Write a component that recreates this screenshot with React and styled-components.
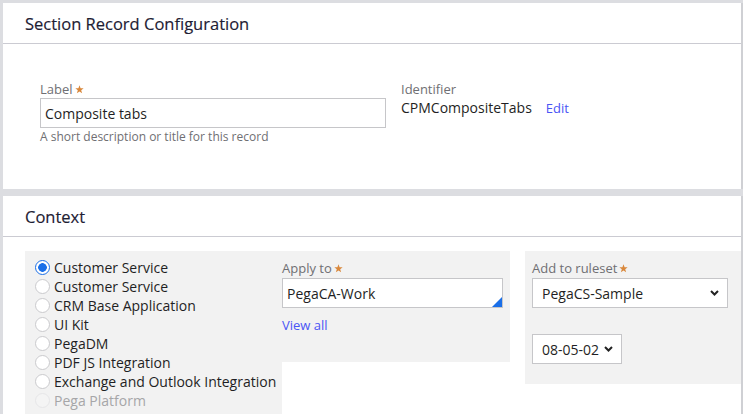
import React from "react";
import styled, { createGlobalStyle } from "styled-components";

const GlobalStyle = createGlobalStyle`
  html, body {
    margin: 0;
    padding: 0;
    background: #dcdde1;
    font-family: "Open Sans", "Liberation Sans", sans-serif;
    color: #1f1f24;
  }
`;

const apps = [
  { id: 1, label: "Customer Service", checked: true },
  { id: 2, label: "Customer Service" },
  { id: 3, label: "CRM Base Application" },
  { id: 4, label: "UI Kit" },
  { id: 5, label: "PegaDM" },
  { id: 6, label: "PDF JS Integration" },
  { id: 7, label: "Exchange and Outlook Integration" },
  { id: 8, label: "Pega Platform", disabled: true },
];

const Chevron = () => (
  <svg width="9" height="6" viewBox="0 0 9 6">
    <path d="M1 1 L4.5 4.5 L8 1" fill="none" stroke="#222" strokeWidth="2" />
  </svg>
);

const Star = () => (
  <StarBox>
    <svg width="9" height="9" viewBox="0 0 10 10">
      <path
        d="M5 0.4 L6.2 3.6 L9.6 3.7 L6.9 5.8 L7.9 9.3 L5 7.3 L2.1 9.3 L3.1 5.8 L0.4 3.7 L3.8 3.6 Z"
        fill="#d9883c"
      />
    </svg>
  </StarBox>
);

const App = () => {
  return (
    <>
      <GlobalStyle />
      <Page>
        <Card>
          <CardHeader>
            <Title>Section Record Configuration</Title>
          </CardHeader>
          <RecordBody>
            <Field>
              <FieldLabel>
                Label
                <Star />
              </FieldLabel>
              <TextInput defaultValue="Composite tabs" />
              <Hint>A short description or title for this record</Hint>
            </Field>
            <Field>
              <FieldLabel>Identifier</FieldLabel>
              <IdentRow>
                <span>CPMCompositeTabs</span>
                <LinkText>Edit</LinkText>
              </IdentRow>
            </Field>
          </RecordBody>
        </Card>
        <Card grow>
          <CardHeader>
            <Title>Context</Title>
          </CardHeader>
          <ContextBody>
            <RadioColumn>
              {apps.map((a) => (
                <RadioRow key={a.id} disabled={a.disabled}>
                  <RadioCircle checked={a.checked} disabled={a.disabled} />
                  {a.label}
                </RadioRow>
              ))}
            </RadioColumn>
            <ApplyColumn>
              <FieldLabel>
                Apply to
                <Star />
              </FieldLabel>
              <InputWrap>
                <TextInput small defaultValue="PegaCA-Work" />
                <Corner />
              </InputWrap>
              <ViewAll>View all</ViewAll>
            </ApplyColumn>
            <RulesetColumn>
              <FieldLabel>
                Add to ruleset
                <Star />
              </FieldLabel>
              <SelectWrap width={196}>
                <Select defaultValue="PegaCS-Sample">
                  <option>PegaCS-Sample</option>
                </Select>
                <ChevronBox>
                  <Chevron />
                </ChevronBox>
              </SelectWrap>
              <SelectWrap width={90} top={26}>
                <Select defaultValue="08-05-02">
                  <option>08-05-02</option>
                </Select>
                <ChevronBox>
                  <Chevron />
                </ChevronBox>
              </SelectWrap>
            </RulesetColumn>
          </ContextBody>
        </Card>
      </Page>
    </>
  );
};

export default App;

const Page = styled.div`
  display: flex;
  flex-direction: column;
  gap: 7px;
  padding: 3px 0 0 3px;
  height: 414px;
  box-sizing: border-box;
  overflow: hidden;
`;

const Card = styled.div`
  background: #fff;
  width: 738px;
  border-right: 2px solid #cfd0d4;
  flex: ${(p) => (p.grow ? "1" : "none")};
`;

const CardHeader = styled.div`
  height: 40px;
  border-bottom: 1px solid #cbcbd2;
  display: flex;
  align-items: center;
  padding-left: 22px;
`;

const Title = styled.div`
  font-size: 16.5px;
  color: #1d2033;
  padding-top: 1px;
  -webkit-text-stroke: 0.15px #1d2033;
`;

const RecordBody = styled.div`
  display: flex;
  gap: 15px;
  padding: 36px 0 0 37px;
  height: 145px;
  box-sizing: border-box;
`;

const Field = styled.div`
  display: flex;
  flex-direction: column;
`;

const FieldLabel = styled.div`
  font-size: 13px;
  line-height: 18px;
  color: #6f6f73;
  display: flex;
  align-items: center;
`;

const StarBox = styled.span`
  display: flex;
  margin-left: 2px;
  margin-top: 1px;
`;

const TextInput = styled.input`
  width: ${(p) => (p.small ? "221px" : "346px")};
  height: 30px;
  box-sizing: border-box;
  border: 1px solid #c6c6c9;
  background: #fff;
  font-family: inherit;
  font-size: 14px;
  color: #1f1f24;
  padding: 0 4px;
  margin: 0;
  outline: none;
`;

const Hint = styled.div`
  font-size: 12px;
  line-height: 16px;
  color: #6f6f73;
  margin-top: 1px;
`;

const IdentRow = styled.div`
  display: flex;
  gap: 14px;
  font-size: 14px;
  line-height: 20px;
`;

const LinkText = styled.span`
  color: #4a55f5;
  font-size: 13px;
  line-height: 20px;
`;

const ViewAll = styled(LinkText).attrs({ as: "div" })`
  margin-top: 7px;
`;

const ContextBody = styled.div`
  display: flex;
  align-items: flex-start;
  padding: 14px 0 0 22px;
`;

const RadioColumn = styled.div`
  background: #f2f2f2;
  width: 247px;
  padding: 7px 0 20px 10px;
  display: flex;
  flex-direction: column;
`;

const RadioRow = styled.label`
  display: flex;
  align-items: center;
  gap: 4px;
  font-size: 14px;
  line-height: 19px;
  height: 19px;
  color: ${(p) => (p.disabled ? "#a6a6a8" : "#1f1f24")};
  white-space: nowrap;
`;

const RadioCircle = styled.span`
  width: 15px;
  height: 15px;
  box-sizing: border-box;
  border-radius: 50%;
  border: 1px solid
    ${(p) => (p.checked ? "#1a6fe8" : p.disabled ? "#e6e6e8" : "#cacacd")};
  background: ${(p) =>
    p.checked
      ? "radial-gradient(circle, #1a6fe8 0 4px, #fff 4.6px)"
      : p.disabled
      ? "#f4f4f4"
      : "#fff"};
  flex: none;
`;

const ApplyColumn = styled.div`
  background: #f2f2f2;
  width: 228px;
  height: 111px;
  box-sizing: border-box;
  padding: 8px 7px 0 0;
  display: flex;
  flex-direction: column;
`;

const InputWrap = styled.div`
  position: relative;
  width: 221px;
  margin-top: 1px;
`;

const Corner = styled.span`
  position: absolute;
  right: 1px;
  bottom: 1px;
  width: 0;
  height: 0;
  border-style: solid;
  border-width: 0 0 10px 10px;
  border-color: transparent transparent #1a6fe8 transparent;
`;

const RulesetColumn = styled.div`
  background: #f2f2f2;
  margin-left: 15px;
  flex: 1;
  height: 133px;
  box-sizing: border-box;
  padding: 8px 0 0 7px;
  display: flex;
  flex-direction: column;
  align-items: flex-start;
`;

const SelectWrap = styled.div`
  position: relative;
  width: ${(p) => p.width}px;
  margin-top: ${(p) => p.top || 1}px;
`;

const Select = styled.select`
  appearance: none;
  width: 100%;
  height: 30px;
  box-sizing: border-box;
  border: 1px solid #c6c6c9;
  background: #fff;
  font-family: inherit;
  font-size: 14px;
  color: #1f1f24;
  padding: 0 0 0 9px;
  margin: 0;
  outline: none;
`;

const ChevronBox = styled.span`
  position: absolute;
  right: 9px;
  top: 12px;
  display: flex;
  pointer-events: none;
`;
